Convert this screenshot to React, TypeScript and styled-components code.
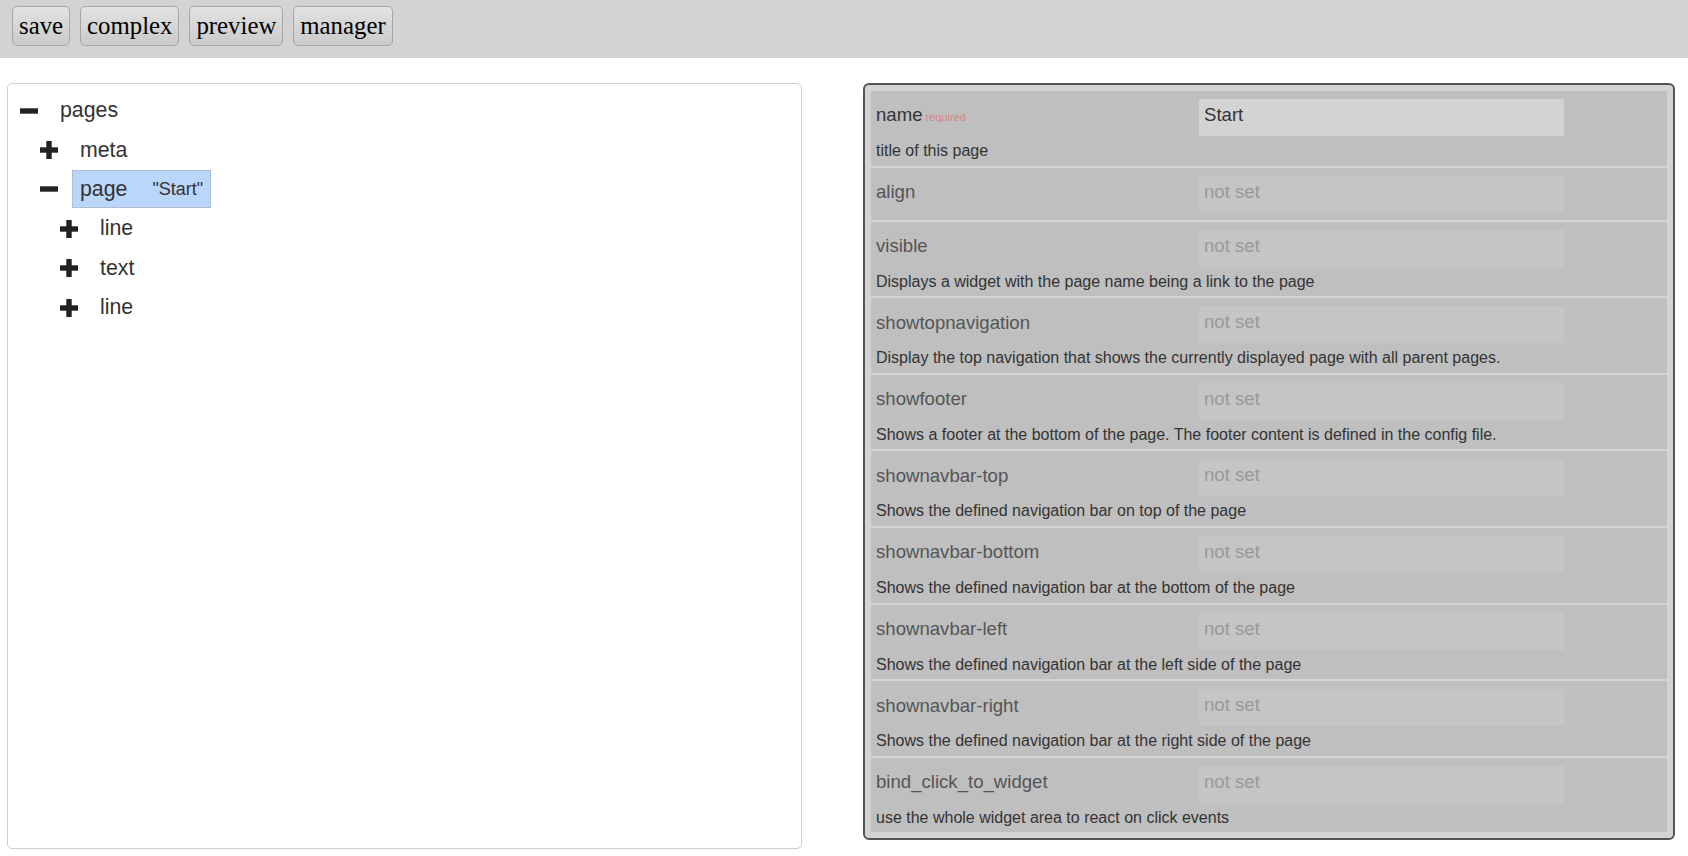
import React from 'react';
import styled, { createGlobalStyle } from 'styled-components';

const GlobalStyle = createGlobalStyle`
  html, body {
    margin: 0;
    padding: 0;
    background: #fff;
    font-family: "Liberation Sans", Arial, sans-serif;
  }
`;

type TreeNode = {
  label: string;
  value?: string;
  level: number;
  expanded: boolean;
  selected?: boolean;
};

const TREE: TreeNode[] = [
  { label: 'pages', level: 0, expanded: true },
  { label: 'meta', level: 1, expanded: false },
  { label: 'page', value: '"Start"', level: 1, expanded: true, selected: true },
  { label: 'line', level: 2, expanded: false },
  { label: 'text', level: 2, expanded: false },
  { label: 'line', level: 2, expanded: false },
];

type Property = {
  name: string;
  value?: string;
  required?: boolean;
  description?: string;
};

const PROPERTIES: Property[] = [
  { name: 'name', value: 'Start', required: true, description: 'title of this page' },
  { name: 'align' },
  { name: 'visible', description: 'Displays a widget with the page name being a link to the page' },
  {
    name: 'showtopnavigation',
    description: 'Display the top navigation that shows the currently displayed page with all parent pages.',
  },
  {
    name: 'showfooter',
    description: 'Shows a footer at the bottom of the page. The footer content is defined in the config file.',
  },
  { name: 'shownavbar-top', description: 'Shows the defined navigation bar on top of the page' },
  { name: 'shownavbar-bottom', description: 'Shows the defined navigation bar at the bottom of the page' },
  { name: 'shownavbar-left', description: 'Shows the defined navigation bar at the left side of the page' },
  { name: 'shownavbar-right', description: 'Shows the defined navigation bar at the right side of the page' },
  { name: 'bind_click_to_widget', description: 'use the whole widget area to react on click events' },
];

const App = () => {
  return (
    <>
      <GlobalStyle />
      <StyledToolbar>
        <StyledToolButton>save</StyledToolButton>
        <StyledToolButton>complex</StyledToolButton>
        <StyledToolButton>preview</StyledToolButton>
        <StyledToolButton>manager</StyledToolButton>
      </StyledToolbar>
      <StyledMain>
        <StyledTreePanel>
          {TREE.map((node, i) => (
            <StyledTreeRow key={i} level={node.level}>
              <ToggleIcon expanded={node.expanded} />
              <StyledTreeLabel selected={!!node.selected}>
                {node.label}
                {node.value && <StyledTreeValue>{node.value}</StyledTreeValue>}
              </StyledTreeLabel>
            </StyledTreeRow>
          ))}
        </StyledTreePanel>
        <StyledEditor>
          {PROPERTIES.map((prop) => (
            <StyledPropRow key={prop.name}>
              <StyledPropName isSet={!!prop.value}>
                {prop.name}
                {prop.required && <StyledRequired>required</StyledRequired>}
              </StyledPropName>
              <StyledPropInput isSet={!!prop.value} defaultValue={prop.value} placeholder="not set" />
              {prop.description && <StyledPropDescription>{prop.description}</StyledPropDescription>}
            </StyledPropRow>
          ))}
        </StyledEditor>
      </StyledMain>
    </>
  );
};

function ToggleIcon({ expanded }: { expanded: boolean }) {
  return (
    <StyledToggle viewBox="0 0 20 20" width={20} height={20}>
      <rect x="0" y="7" width="20" height="6" fill="#222" />
      {!expanded && <rect x="7" y="0" width="6" height="20" fill="#222" />}
    </StyledToggle>
  );
}

const StyledToolbar = styled.div`
  display: flex;
  align-items: flex-start;
  gap: 10px;
  height: 58px;
  box-sizing: border-box;
  padding: 6px 12px;
  background: #d3d3d3;
`;
const StyledToolButton = styled.button`
  height: 40px;
  padding: 0 6px;
  border: 1px solid #a6a6a6;
  border-radius: 5px;
  background: linear-gradient(to bottom, #e2e2e2, #cacaca);
  color: #000;
  font-family: "Liberation Serif", "Times New Roman", serif;
  font-size: 24.8px;
  line-height: 1;
  cursor: pointer;
`;

const StyledMain = styled.div`
  display: grid;
  grid-template-columns: 795px 812px;
  column-gap: 61px;
  align-items: start;
  padding: 25px 0 0 7px;
`;

const StyledTreePanel = styled.div`
  height: 766px;
  box-sizing: border-box;
  padding: 7px 0 0 11px;
  border: 1px solid #cfcfcf;
  border-radius: 5px;
  background: #fff;
`;
const StyledTreeRow = styled.div<{ level: number }>`
  display: flex;
  align-items: center;
  height: 39.4px;
  padding-left: ${({ level }) => level * 20}px;
`;
const StyledToggle = styled.svg`
  flex: none;
  width: 20px;
  height: 18px;
  margin-right: 13px;
`;
const StyledTreeLabel = styled.div<{ selected: boolean }>`
  display: flex;
  align-items: center;
  height: 38px;
  box-sizing: border-box;
  padding: 0 7px;
  border: 1px dotted ${({ selected }) => (selected ? '#9aa7b8' : 'transparent')};
  background: ${({ selected }) => (selected ? '#bad6fb' : 'transparent')};
  color: #333;
  font-size: 21.3px;
`;
const StyledTreeValue = styled.span`
  margin-left: 25px;
  font-size: 18px;
`;

const StyledEditor = styled.div`
  display: flex;
  flex-direction: column;
  gap: 2px;
  padding: 6px;
  border: 2px solid #555;
  border-radius: 6px;
  background: #d3d3d3;
`;
const StyledPropRow = styled.div`
  display: grid;
  grid-template-columns: 323px 365px 1fr;
  align-items: center;
  padding: 8px 5px 7px;
  background: #bfbfbf;
`;
const StyledPropName = styled.div<{ isSet: boolean }>`
  padding-bottom: 4px;
  color: ${({ isSet }) => (isSet ? '#333' : '#555')};
  font-size: 18.6px;
  line-height: 22px;
`;
const StyledRequired = styled.span`
  margin-left: 3px;
  color: #d28787;
  font-size: 11px;
`;
const StyledPropInput = styled.input<{ isSet: boolean }>`
  display: block;
  height: 37px;
  box-sizing: border-box;
  margin: 0;
  padding: 0 5px 5px;
  border: none;
  outline: none;
  background: ${({ isSet }) => (isSet ? '#d3d3d3' : '#c5c5c5')};
  color: #333;
  font-family: "Liberation Sans", Arial, sans-serif;
  font-size: 18.6px;
  &::placeholder {
    color: #999;
  }
`;
const StyledPropDescription = styled.div`
  grid-column: 1 / -1;
  height: 22.6px;
  box-sizing: border-box;
  padding-top: 7px;
  color: #333;
  font-size: 16px;
  line-height: 16px;
`;

export default App;
